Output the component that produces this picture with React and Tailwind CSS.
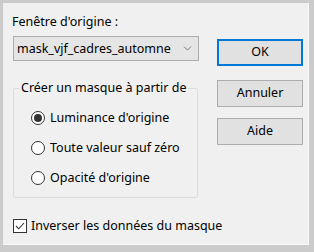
import React from "react";
import { ChevronDown } from "lucide-react";

function Radio({ label, checked }) {
  return (
    <div className="flex items-center h-[30px]">
      <span className="w-[14px] h-[14px] rounded-full border border-[#333333] bg-white flex items-center justify-center">
        {checked && <span className="w-[8px] h-[8px] rounded-full bg-[#333333]" />}
      </span>
      <span className="ml-[5px] text-[12.5px] leading-[16px] text-black whitespace-nowrap">{label}</span>
    </div>
  );
}

function Button({ children, active, className = "" }) {
  return (
    <button
      className={
        "w-[86px] h-[27px] bg-[#e1e1e1] text-[12.5px] text-black " +
        (active ? "border-2 border-[#0078d7] " : "border border-[#adadad] ") +
        className
      }
    >
      {children}
    </button>
  );
}

export default function App() {
  return (
    <div
      className="w-[314px] h-[252px] bg-[#cbcbcb] pt-[3px] pl-[3px]"
      style={{ fontFamily: "'Noto Sans', 'Open Sans', sans-serif" }}
    >
      <div className="w-[306px] h-[242px] bg-[#f0f0f0] border-r border-b border-[#fafafa] flex pl-[10px] pt-[11px]">
        <div className="w-[186px] flex flex-col">
          <div className="text-[12.5px] leading-[16px] text-black ml-[-1px] whitespace-nowrap">Fenêtre d'origine :</div>
          <div className="mt-[6px] h-[25px] bg-[#e5e5e5] border border-[#adadad] flex items-center justify-between pl-[3px] pr-[4px]">
            <span className="text-[12.5px] leading-[16px] text-black whitespace-nowrap">mask_vjf_cadres_automne</span>
            <ChevronDown size={13} strokeWidth={1.1} className="text-[#333333]" />
          </div>
          <div className="mt-[27px] relative w-[185px] h-[110px] border border-[#dcdcdc] rounded-[2px]">
            <span className="absolute left-[5px] top-[-9px] bg-[#f0f0f0] px-[2px] text-[12.5px] leading-[16px] text-black whitespace-nowrap">
              Créer un masque à partir de
            </span>
            <div className="flex flex-col pl-[17px] pt-[14px]">
              <Radio label="Luminance d'origine" checked />
              <Radio label="Toute valeur sauf zéro" />
              <Radio label="Opacité d'origine" />
            </div>
          </div>
          <div className="mt-[20px] flex items-center">
            <span className="shrink-0 w-[14px] h-[14px] border border-[#333333] bg-white flex items-center justify-center">
              <svg width="10" height="8" viewBox="0 0 10 8">
                <path d="M1 4 L3.8 6.8 L9 1" fill="none" stroke="#333333" strokeWidth="1.1" />
              </svg>
            </span>
            <span className="ml-[4px] text-[12.5px] leading-[16px] text-black whitespace-nowrap">
              Inverser les données du masque
            </span>
          </div>
        </div>
        <div className="ml-[18px] pt-[25px] flex flex-col">
          <Button active>OK</Button>
          <Button className="mt-[14px]">Annuler</Button>
          <Button className="mt-[11px]">Aide</Button>
        </div>
      </div>
    </div>
  );
}
